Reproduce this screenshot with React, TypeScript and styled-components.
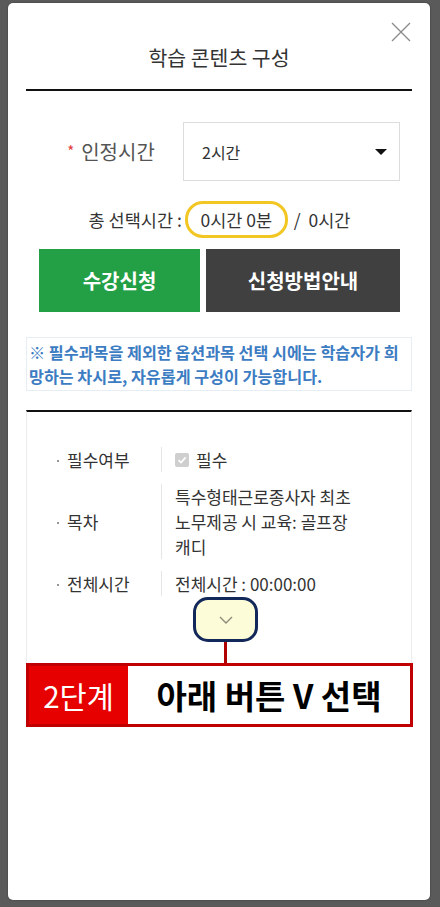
import styled, { createGlobalStyle } from "styled-components";

const GlobalStyle = createGlobalStyle`
  * { box-sizing: border-box; }
  body {
    margin: 0;
    background: #5a5a5a;
    font-family: "Noto Sans CJK KR", "Noto Sans", sans-serif;
  }
`;

const rows = [
  { label: "필수여부", kind: "check" },
  { label: "목차", kind: "text", value: "특수형태근로종사자 최초 노무제공 시 교육: 골프장 캐디" },
  { label: "전체시간", kind: "text", value: "전체시간 : 00:00:00" },
];

export default function App() {
  return (
    <>
      <GlobalStyle />
      <Page>
        <Panel>
          <CloseButton aria-label="닫기">
            <svg width="20" height="20" viewBox="0 0 20 20">
              <path d="M1 1 L19 19 M19 1 L1 19" stroke="#8a8a8a" strokeWidth="1.3" fill="none" />
            </svg>
          </CloseButton>
          <Header>
            <Title>학습 콘텐츠 구성</Title>
          </Header>

          <Form>
            <FieldRow>
              <FieldLabel>
                <Star>*</Star>인정시간
              </FieldLabel>
              <Select>
                <span>2시간</span>
                <Caret />
              </Select>
            </FieldRow>

            <TotalRow>
              총 선택시간 :<Highlight>0시간 0분</Highlight>/&nbsp;&nbsp;0시간
            </TotalRow>

            <Buttons>
              <ActionButton $tone="green" $width={161}>수강신청</ActionButton>
              <ActionButton $tone="dark" $width={194}>신청방법안내</ActionButton>
            </Buttons>
          </Form>

          <Notice>
            ※ 필수과목을 제외한 옵션과목 선택 시에는 학습자가 희망하는 차시로, 자유롭게 구성이 가능합니다.
          </Notice>

          <Detail>
            <DetailRows>
              {rows.map((row) => (
                <DetailRow key={row.label}>
                  <DetailLabel>{row.label}</DetailLabel>
                  <DetailValue>
                    {row.kind === "check" ? (
                      <CheckLine>
                        <CheckBox>
                          <svg width="10" height="10" viewBox="0 0 10 10">
                            <path d="M1.5 5.2 L4 7.6 L8.6 2.4" stroke="#fff" strokeWidth="1.6" fill="none" />
                          </svg>
                        </CheckBox>
                        필수
                      </CheckLine>
                    ) : (
                      row.value
                    )}
                  </DetailValue>
                </DetailRow>
              ))}
            </DetailRows>
            <ToggleButton aria-label="펼치기">
              <svg width="14" height="8" viewBox="0 0 14 8">
                <path d="M1 1 L7 7 L13 1" stroke="#8c8c7a" strokeWidth="1.4" fill="none" />
              </svg>
            </ToggleButton>
            <Connector />
          </Detail>

          <Callout>
            <StepTag>2단계</StepTag>
            <StepText>아래 버튼 V 선택</StepText>
          </Callout>
        </Panel>
      </Page>
    </>
  );
}

const Page = styled.div`
  padding: 3px 10px 7px 8px;
`;

const Panel = styled.div`
  position: relative;
  height: 897px;
  background: #fff;
  border-radius: 5px;
  padding: 0 18px;
  box-shadow: 0 0 2px rgba(0, 0, 0, 0.4);
`;

const CloseButton = styled.button`
  position: absolute;
  top: 19px;
  right: 19px;
  width: 20px;
  height: 20px;
  padding: 0;
  border: 0;
  background: none;
  display: flex;
`;

const Header = styled.div`
  padding: 40px 0 18px;
  border-bottom: 2px solid #111;
  text-align: center;
`;

const Title = styled.h1`
  margin: 0;
  font-size: 20.5px;
  line-height: 28px;
  font-weight: 400;
  color: #333;
`;

const Form = styled.div`
  padding: 31px 12px 0 13px;
`;

const FieldRow = styled.div`
  display: flex;
  align-items: center;
`;

const FieldLabel = styled.div`
  width: 144px;
  text-align: center;
  font-size: 20px;
  color: #555;
`;

const Star = styled.span`
  color: #e23b3b;
  font-size: 15px;
  margin-right: 7px;
  vertical-align: 3px;
`;

const Select = styled.div`
  flex: 1;
  height: 59px;
  border: 1px solid #ddd;
  display: flex;
  align-items: center;
  justify-content: space-between;
  padding: 0 12px 0 18px;
  font-size: 16px;
  color: #333;
`;

const Caret = styled.span`
  width: 0;
  height: 0;
  border-left: 6px solid transparent;
  border-right: 6px solid transparent;
  border-top: 6px solid #111;
`;

const TotalRow = styled.div`
  margin-top: 20px;
  height: 37px;
  display: flex;
  align-items: center;
  justify-content: center;
  font-size: 17.5px;
  color: #333;
`;

const Highlight = styled.span`
  display: inline-flex;
  align-items: center;
  justify-content: center;
  height: 37px;
  width: 103px;
  margin: 0 6px 0 3px;
  border: 3px solid #f2c623;
  border-radius: 18px;
`;

const Buttons = styled.div`
  margin-top: 11px;
  display: flex;
  gap: 6px;
`;

const ActionButton = styled.button<{ $tone: "green" | "dark"; $width: number }>`
  width: ${(p) => p.$width}px;
  height: 63px;
  border: 0;
  font-family: inherit;
  font-size: 20px;
  font-weight: 700;
  color: #fff;
  background: ${(p) => (p.$tone === "green" ? "#23a046" : "#404040")};
`;

const Notice = styled.p`
  margin: 25px 0 0;
  padding: 2px 12px 2px 2px;
  border: 1px solid #e6edf3;
  font-size: 16.2px;
  line-height: 24px;
  font-weight: 700;
  color: #3c7cc2;
`;

const Detail = styled.div`
  margin-top: 19px;
  border-top: 2px solid #111;
  border-left: 1px solid #ececec;
  border-right: 1px solid #ececec;
  padding-top: 35px;
  display: flex;
  flex-direction: column;
`;

const DetailRows = styled.div`
  display: flex;
  flex-direction: column;
  gap: 12px;
`;

const DetailRow = styled.div`
  display: flex;
  font-size: 17px;
  line-height: 25px;
  color: #333;
`;

const DetailLabel = styled.div`
  width: 134px;
  flex-shrink: 0;
  padding-left: 40px;
  position: relative;
  display: flex;
  align-items: center;

  &::before {
    content: "";
    position: absolute;
    left: 30px;
    top: 50%;
    width: 2px;
    height: 2px;
    background: #999;
  }
`;

const DetailValue = styled.div`
  width: 200px;
  border-left: 1px solid #e5e5e5;
  padding-left: 13px;
`;

const CheckLine = styled.span`
  display: inline-flex;
  align-items: center;
  vertical-align: top;
`;

const CheckBox = styled.span`
  width: 14px;
  height: 14px;
  margin-right: 7px;
  border-radius: 2px;
  background: #cfcfcf;
  display: inline-flex;
  align-items: center;
  justify-content: center;
`;

const ToggleButton = styled.button`
  margin: 1px 0 0 166px;
  width: 65px;
  height: 45px;
  border: 3px solid #13285a;
  border-radius: 15px;
  background: #fdfcd8;
  display: flex;
  align-items: center;
  justify-content: center;
  padding: 0;
`;

const Connector = styled.div`
  margin-left: 197px;
  width: 3px;
  height: 21px;
  background: #b00000;
`;

const Callout = styled.div`
  height: 64px;
  display: flex;
  border: 3px solid #c00000;
  margin: 0 -1px 0 0;
`;

const StepTag = styled.div`
  width: 99px;
  background: #e60000;
  color: #fff;
  font-size: 29.5px;
  display: flex;
  align-items: center;
  justify-content: center;
`;

const StepText = styled.div`
  flex: 1;
  display: flex;
  align-items: center;
  justify-content: center;
  font-size: 33px;
  font-weight: 700;
  color: #000;
`;
